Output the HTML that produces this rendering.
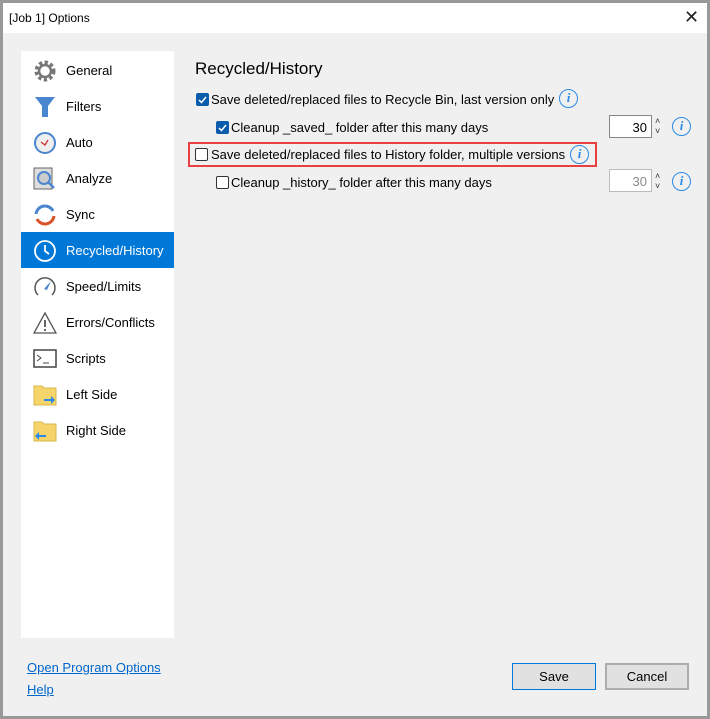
<!DOCTYPE html>
<html><head><meta charset="utf-8"><style>
*{margin:0;padding:0;box-sizing:border-box}
body{width:710px;height:719px;background:#999;font-family:"Liberation Sans",sans-serif;font-size:13px;color:#000;position:relative;overflow:hidden}
.win{position:absolute;left:3px;top:3px;width:704px;height:713px;background:#f0f0f0}
.title{position:absolute;left:0;top:0;width:704px;height:30px;background:#fff}
.title span{position:absolute;left:6px;top:8px;font-size:12px}
.title .x{left:681px;top:4px;font-size:18px;font-weight:100;color:#222}
.side{position:absolute;left:18px;top:48px;width:153px;height:587px;background:#fff}
.it{position:absolute;left:0;width:153px;height:36px}
.it .ic{position:absolute;left:12px;top:7px;width:24px;height:24px}
.it .t{position:absolute;left:45px;top:11px}
.sel{background:#0078d7;color:#fff}
.a{position:absolute;white-space:nowrap}
.cb{position:absolute;width:13px;height:13px;border:1px solid #333;border-radius:2px;background:#fff}
.cb.on{background:#0b5cad;border-color:#0b5cad}
.info{position:absolute;width:19px;height:19px;border:1.5px solid #2a8ae6;border-radius:50%;color:#2a8ae6;font:italic bold 13px "Liberation Serif",serif;text-align:center;line-height:16px}
.num{position:absolute;width:43px;height:23px;border:1px solid #888;background:#fff;text-align:right;padding:4px 4px 0 0}
.spin{position:absolute;font-size:9px;line-height:10px;color:#333}
.btn{position:absolute;width:84px;height:27px;background:#e1e1e1;border:2px solid #adadad;text-align:center;line-height:23px}
a{color:#0066cc;text-decoration:underline}
</style></head><body>
<div class="win">
<div class="title"><span>[Job 1] Options</span><span class="x">✕</span></div>
<div class="side">
<div class="it" style="top:1px"><svg class="ic" viewBox="0 0 24 24"><circle cx="12" cy="12" r="8" fill="none" stroke="#777" stroke-width="5" stroke-dasharray="3 2.3"/><circle cx="12" cy="12" r="6" fill="none" stroke="#777" stroke-width="2.5"/></svg><span class="t">General</span></div>
<div class="it" style="top:37px"><svg class="ic" viewBox="0 0 24 24"><path d="M2 2h20l-7 9v11h-6V11z" fill="#4a86cf"/></svg><span class="t">Filters</span></div>
<div class="it" style="top:73px"><svg class="ic" viewBox="0 0 24 24"><circle cx="12" cy="12" r="10" fill="#eee" stroke="#4a86cf" stroke-width="2"/><path d="M8 11l4 3 3-5" stroke="#c33" fill="none" stroke-width="1.3"/></svg><span class="t">Auto</span></div>
<div class="it" style="top:109px"><svg class="ic" viewBox="0 0 24 24"><rect x="1" y="1" width="18" height="21" fill="#ddd" stroke="#666"/><circle cx="11" cy="11" r="6" fill="#ccc" stroke="#4a86cf" stroke-width="2"/><path d="M15 15l6 6" stroke="#4a86cf" stroke-width="2.5"/></svg><span class="t">Analyze</span></div>
<div class="it" style="top:145px"><svg class="ic" viewBox="0 0 24 24"><path d="M3 11A9 9 0 0 1 20 8" stroke="#4a86cf" stroke-width="3" fill="none"/><path d="M21 13A9 9 0 0 1 4 16" stroke="#d9542a" stroke-width="3" fill="none"/></svg><span class="t">Sync</span></div>
<div class="it sel" style="top:181px"><svg class="ic" viewBox="0 0 24 24"><circle cx="12" cy="12" r="10" fill="none" stroke="#fff" stroke-width="1.8"/><path d="M12 6v6l4 3" stroke="#fff" stroke-width="1.8" fill="none"/></svg><span class="t">Recycled/History</span></div>
<div class="it" style="top:217px"><svg class="ic" viewBox="0 0 24 24"><path d="M5 20A10 10 0 1 1 19 20" stroke="#555" stroke-width="1.5" fill="none"/><path d="M11 14l7-8-4 9z" fill="#4a86cf"/></svg><span class="t">Speed/Limits</span></div>
<div class="it" style="top:253px"><svg class="ic" viewBox="0 0 24 24"><path d="M12 2L23 22H1z" fill="none" stroke="#555" stroke-width="1.3"/><path d="M12 9v7M12 18v2" stroke="#333" stroke-width="1.5"/></svg><span class="t">Errors/Conflicts</span></div>
<div class="it" style="top:289px"><svg class="ic" viewBox="0 0 24 24"><rect x="1" y="3" width="22" height="17" fill="#fff" stroke="#444" stroke-width="1.5"/><path d="M4 8l4 3-4 3M10 16h6" stroke="#444" fill="none"/></svg><span class="t">Scripts</span></div>
<div class="it" style="top:325px"><svg class="ic" viewBox="0 0 24 24"><path d="M1 3h8l2 2h12v17H1z" fill="#f5d56b" stroke="#d9b64a"/><path d="M11 16h7v-3l4 4-4 4v-3h-7z" fill="#2a8ae6"/></svg><span class="t">Left Side</span></div>
<div class="it" style="top:361px"><svg class="ic" viewBox="0 0 24 24"><path d="M1 3h8l2 2h12v17H1z" fill="#f5d56b" stroke="#d9b64a"/><path d="M13 16h-7v-3l-4 4 4 4v-3h7z" fill="#2a8ae6"/></svg><span class="t">Right Side</span></div>
</div>
<div class="a" style="left:192px;top:56px;font-size:17px">Recycled/History</div>
<div class="cb on" style="left:193px;top:90px"><svg width="11" height="11" style="position:absolute;left:0;top:0"><path d="M2 6l2.5 2.5L9 3" stroke="#fff" stroke-width="1.5" fill="none"/></svg></div>
<div class="a" style="left:208px;top:89px">Save deleted/replaced files to Recycle Bin, last version only</div>
<div class="info" style="left:556px;top:86px">i</div>
<div class="cb on" style="left:213px;top:118px"><svg width="11" height="11" style="position:absolute;left:0;top:0"><path d="M2 6l2.5 2.5L9 3" stroke="#fff" stroke-width="1.5" fill="none"/></svg></div>
<div class="a" style="left:228px;top:117px">Cleanup _saved_ folder after this many days</div>
<div class="num" style="left:606px;top:112px">30</div>
<div class="spin" style="left:652px;top:113px">˄<br>˅</div>
<div class="info" style="left:669px;top:114px">i</div>
<div style="position:absolute;left:185px;top:139px;width:409px;height:25px;border:2px solid #e84040"></div>
<div class="cb" style="left:192px;top:145px"></div>
<div class="a" style="left:208px;top:144px">Save deleted/replaced files to History folder, multiple versions</div>
<div class="info" style="left:567px;top:142px">i</div>
<div class="cb" style="left:213px;top:173px"></div>
<div class="a" style="left:228px;top:172px">Cleanup _history_ folder after this many days</div>
<div class="num" style="left:606px;top:166px;color:#888;border-color:#bbb">30</div>
<div class="spin" style="left:652px;top:168px">˄<br>˅</div>
<div class="info" style="left:669px;top:169px">i</div>
<a class="a" style="left:24px;top:657px">Open Program Options</a>
<a class="a" style="left:24px;top:679px">Help</a>
<div class="btn" style="left:509px;top:660px;border:1px solid #0078d7;line-height:25px">Save</div>
<div class="btn" style="left:602px;top:660px">Cancel</div>
</div>
</body></html>
